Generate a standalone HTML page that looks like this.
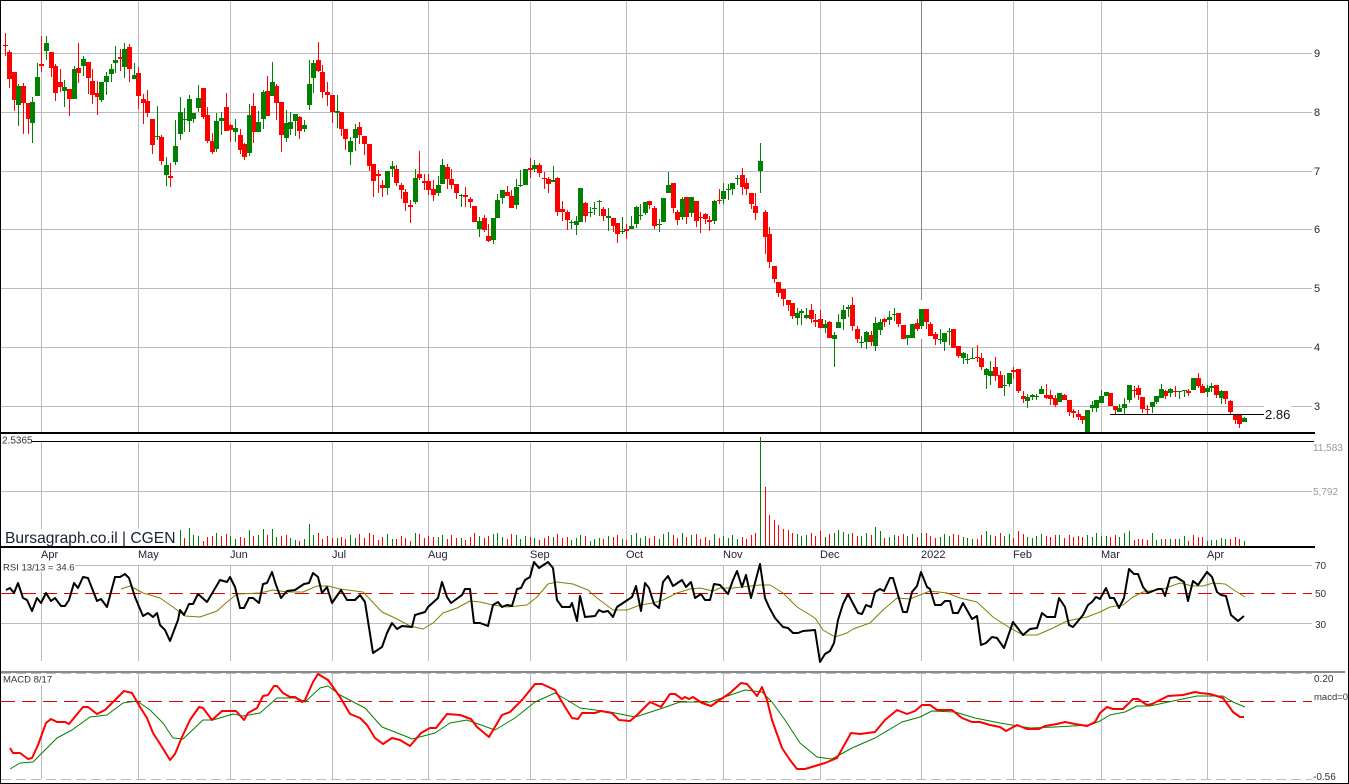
<!DOCTYPE html>
<html>
<head>
<meta charset="utf-8">
<title>Bursagraph.co.il | CGEN</title>
<style>
html,body{margin:0;padding:0;background:#fff;width:1349px;height:784px;overflow:hidden}
svg{display:block}
text{font-family:"Liberation Sans",Arial,sans-serif;fill:#333;font-size:10px}
.m{font-size:11px;fill:#223}
.g{fill:#999}
.line{fill:none;stroke-linejoin:round}
</style>
</head>
<body>
<svg width="1349" height="784" viewBox="0 0 1349 784" xmlns="http://www.w3.org/2000/svg">
<rect width="1349" height="784" fill="#fff"/>

<!-- grid -->
<g shape-rendering="crispEdges" fill="none">
<path stroke="#bbb" d="M1 53.5H1312M1 112.5H1312M1 171.5H1312M1 229.5H1312M1 288.5H1312M1 347.5H1312M1 406.5H1312M1 491.5H1312M1 565.5H1312M1 623.5H1312"/>
<path stroke="#bbb" d="M41.5 1V432M138.5 1V432M230.5 1V432M332.5 1V432M428.5 1V432M530.5 1V432M626.5 1V432M723.5 1V432M820.5 1V432M1013.5 1V432M1101.5 1V432M1207.5 1V432"/>
<path stroke="#888" d="M921.5 1V300M921.5 339V432"/>
<path stroke="#bbb" d="M41.5 442V529M138.5 442V529M230.5 442V546M332.5 442V546M428.5 442V546M530.5 442V546M626.5 442V546M723.5 442V546M820.5 442V546M921.5 442V546M1013.5 442V546M1101.5 442V546M1207.5 442V546"/>
<path stroke="#bbb" d="M41.5 572V661M138.5 565V661M230.5 565V661M332.5 565V661M428.5 565V661M530.5 565V661M626.5 565V661M723.5 565V661M820.5 565V661M921.5 565V661M1013.5 565V661M1101.5 565V661M1207.5 565V661"/>
<path stroke="#bbb" d="M41.5 685V779M138.5 673V779M230.5 673V779M332.5 673V779M428.5 673V779M530.5 673V779M626.5 673V779M723.5 673V779M820.5 673V779M921.5 673V779M1013.5 673V779M1101.5 673V779M1207.5 673V779"/>
<path stroke="#bbb" stroke-dasharray="10 5" d="M1 673.5H1312M1 779.5H1312"/>
<path stroke="#e00000" stroke-dasharray="14 7" d="M1 593.5H1312M1 701.5H1312"/>
</g>

<!-- red candles -->
<g fill="none" stroke="#f00" shape-rendering="crispEdges">
<path stroke-width="1" d="M5.5 33V56M9.5 50V88M14.5 72V111M23.5 83V134M28.5 103V134M41.5 36V72M51.5 52V77M55.5 64V101M60.5 69V92M69.5 89V116M78.5 43V83M88.5 62V94M92.5 69V104M97.5 81V115M120.5 49V71M129.5 44V82M138.5 67V109M143.5 94V124M147.5 90V117M152.5 119V154M161.5 135V165M170.5 163V187M203.5 88V119M207.5 107V143M212.5 133V154M226.5 93V131M230.5 124V142M240.5 129V154M244.5 143V160M253.5 93V143M267.5 76V116M276.5 84V120M281.5 102V152M299.5 116V139M318.5 42V72M322.5 65V98M327.5 82V106M332.5 95V123M341.5 112V136M345.5 129V150M359.5 122V144M364.5 136V155M369.5 144V171M373.5 164V197M378.5 170V193M382.5 180V197M396.5 165V186M401.5 183V199M405.5 189V211M410.5 200V223M419.5 151V180M424.5 174V190M428.5 174V195M433.5 180V201M447.5 164V189M451.5 169V189M456.5 184V199M465.5 187V207M470.5 197V208M474.5 206V222M484.5 215V232M488.5 224V242M507.5 186V196M511.5 190V208M530.5 158V178M539.5 163V177M544.5 172V189M548.5 177V193M557.5 177V216M562.5 201V221M567.5 210V230M585.5 202V222M603.5 207V221M613.5 218V232M617.5 223V243M626.5 224V239M649.5 201V209M654.5 206V229M673.5 183V213M677.5 210V225M686.5 197V224M696.5 201V227M700.5 212V233M705.5 213V224M709.5 216V231M719.5 189V204M742.5 168V195M746.5 178V195M751.5 193V209M755.5 193V220M765.5 210V254M769.5 227V268M774.5 266V283M778.5 282V297M783.5 289V306M788.5 300V311M792.5 303V319M811.5 304V323M815.5 314V327M820.5 310V328M829.5 321V338M852.5 297V331M857.5 326V343M871.5 331V346M884.5 318V327M898.5 313V327M903.5 325V339M917.5 319V331M926.5 309V329M930.5 322V336M935.5 332V345M953.5 329V348M958.5 346V358M977.5 345V362M981.5 353V370M995.5 357V381M1000.5 371V388M1013.5 367V379M1018.5 369V393M1023.5 391V403M1046.5 384V399M1050.5 390V405M1055.5 395V407M1064.5 394V400M1069.5 400V416M1073.5 409V418M1078.5 410V420M1082.5 416V424M1110.5 393V406M1115.5 406V415M1134.5 386V398M1138.5 385V400M1142.5 397V413M1147.5 405V415M1165.5 390V399M1175.5 386V397M1188.5 389V396M1198.5 373V388M1202.5 384V393M1216.5 385V398M1225.5 391V404M1230.5 400V414M1235.5 415V424M1239.5 415V428"/>
<path stroke-width="5" d="M5.5 45V46M9.5 52V79M14.5 72V100M23.5 86V103M28.5 103V119M41.5 64V66M51.5 52V68M55.5 66V93M60.5 82V87M69.5 89V99M78.5 68V73M88.5 62V78M92.5 81V95M97.5 93V97M120.5 57V59M129.5 47V69M138.5 73V96M143.5 99V103M147.5 101V113M152.5 119V145M161.5 137V161M170.5 176V178M203.5 88V117M207.5 115V141M212.5 141V152M226.5 107V131M230.5 125V130M240.5 135V150M244.5 144V157M253.5 106V132M267.5 91V116M276.5 86V103M281.5 102V135M299.5 117V131M318.5 60V71M322.5 72V92M327.5 92V95M332.5 95V112M341.5 112V129M345.5 129V139M359.5 127V135M364.5 136V144M369.5 144V166M373.5 164V181M378.5 174V176M382.5 185V188M396.5 169V183M401.5 185V190M405.5 192V203M410.5 205V207M419.5 174V178M424.5 181V183M428.5 181V190M433.5 189V195M447.5 167V179M451.5 179V185M456.5 184V193M465.5 195V197M470.5 199V202M474.5 206V222M484.5 218V230M488.5 236V241M507.5 192V196M511.5 196V208M530.5 168V170M539.5 165V173M544.5 178V179M548.5 179V184M557.5 178V212M562.5 209V212M567.5 212V220M585.5 203V216M603.5 209V216M613.5 218V226M617.5 223V234M626.5 229V231M649.5 201V205M654.5 208V226M673.5 183V208M677.5 212V220M686.5 197V217M696.5 201V221M700.5 217V218M705.5 214V219M709.5 220V222M719.5 200V201M742.5 175V187M746.5 183V189M751.5 193V204M755.5 206V213M765.5 212V237M769.5 234V262M774.5 266V279M778.5 282V293M783.5 289V299M788.5 300V305M792.5 303V316M811.5 310V319M815.5 320V322M820.5 319V328M829.5 322V338M852.5 305V326M857.5 329V339M871.5 335V342M884.5 319V322M898.5 313V324M903.5 325V339M917.5 323V329M926.5 309V322M930.5 324V336M935.5 334V339M953.5 329V348M958.5 346V356M977.5 357V358M981.5 358V367M995.5 367V376M1000.5 375V388M1013.5 370V372M1018.5 369V391M1023.5 396V399M1046.5 395V398M1050.5 395V399M1055.5 398V405M1064.5 395V400M1069.5 400V412M1073.5 411V413M1078.5 414V417M1082.5 416V420M1110.5 393V406M1115.5 406V410M1134.5 390V391M1138.5 388V395M1142.5 397V409M1147.5 409V410M1165.5 391V396M1175.5 391V392M1188.5 391V393M1198.5 378V386M1202.5 386V393M1216.5 385V395M1225.5 391V399M1230.5 401V412M1235.5 415V420M1239.5 415V424"/>
</g>

<!-- green candles -->
<g fill="none" stroke="#008000" shape-rendering="crispEdges">
<path stroke-width="1" d="M18.5 84V126M32.5 97V143M37.5 63V96M46.5 36V60M64.5 80V107M74.5 66V99M83.5 56V76M101.5 82V102M106.5 72V95M111.5 64V82M115.5 46V73M124.5 43V78M134.5 63V79M157.5 106V140M166.5 157V186M175.5 120V165M180.5 97V140M184.5 108V132M189.5 95V132M193.5 113V123M198.5 85V112M216.5 113V152M221.5 112V135M235.5 119V142M249.5 104V156M258.5 111V132M263.5 90V129M272.5 62V96M286.5 110V142M290.5 112V135M295.5 114V136M304.5 120V132M309.5 60V110M313.5 60V93M337.5 95V128M350.5 137V165M355.5 124V151M387.5 171V195M392.5 161V177M415.5 169V204M438.5 176V196M442.5 159V184M461.5 194V207M479.5 217V237M493.5 218V244M497.5 194V218M502.5 190V204M516.5 179V209M520.5 170V187M525.5 169V185M534.5 160V172M553.5 166V182M571.5 220V229M576.5 216V235M580.5 188V222M590.5 207V217M594.5 202V215M599.5 200V216M608.5 208V231M622.5 217V234M631.5 216V229M636.5 206V228M640.5 204V220M645.5 202V215M659.5 219V232M663.5 198V222M668.5 172V193M682.5 197V220M691.5 197V217M714.5 200V224M723.5 183V204M728.5 184V200M732.5 183V195M737.5 175V185M760.5 143V193M797.5 308V325M801.5 309V325M806.5 308V319M825.5 320V333M834.5 332V367M838.5 314V328M843.5 305V330M848.5 305V317M861.5 336V348M866.5 331V349M875.5 317V351M880.5 319V335M889.5 311V325M894.5 308V321M907.5 335V345M912.5 324V338M921.5 309V329M940.5 329V344M944.5 333V351M949.5 328V345M963.5 352V364M967.5 354V364M972.5 348V359M986.5 368V389M990.5 361V385M1004.5 375V396M1009.5 373V387M1027.5 394V408M1032.5 394V400M1036.5 394V400M1041.5 386V394M1059.5 393V402M1087.5 410V432M1092.5 401V412M1096.5 400V412M1101.5 390V403M1106.5 392V396M1119.5 404V412M1124.5 398V415M1129.5 385V403M1152.5 402V413M1156.5 396V404M1161.5 384V398M1170.5 388V397M1179.5 391V399M1184.5 390V397M1193.5 378V390M1207.5 385V397M1211.5 383V392M1221.5 390V404M1244.5 417V422"/>
<path stroke-width="5" d="M18.5 86V105M32.5 102V123M37.5 77V96M46.5 43V51M64.5 87V91M74.5 69V99M83.5 59V66M101.5 82V100M106.5 76V82M111.5 69V74M115.5 60V63M124.5 49V67M134.5 75V79M157.5 136V137M166.5 165V175M175.5 146V162M180.5 112V134M184.5 119V120M189.5 99V121M193.5 113V119M198.5 98V108M216.5 121V149M221.5 118V121M235.5 128V132M249.5 115V153M258.5 122V132M263.5 92V119M272.5 82V96M286.5 123V138M290.5 122V129M295.5 114V121M304.5 125V129M309.5 84V105M313.5 63V78M337.5 111V113M350.5 141V152M355.5 129V138M387.5 171V188M392.5 166V169M415.5 178V202M438.5 185V193M442.5 165V184M461.5 195V196M479.5 221V229M493.5 218V240M497.5 200V218M502.5 190V198M516.5 187V205M520.5 185V186M525.5 169V185M534.5 165V169M553.5 180V182M571.5 222V223M576.5 221V225M580.5 188V222M590.5 212V213M594.5 208V209M599.5 201V202M608.5 216V218M622.5 231V232M631.5 226V229M636.5 207V224M640.5 215V216M645.5 202V213M659.5 224V225M663.5 198V222M668.5 185V193M682.5 199V217M691.5 197V213M714.5 201V221M723.5 191V199M728.5 189V190M732.5 183V189M737.5 178V179M760.5 161V171M797.5 313V318M801.5 311V313M806.5 315V318M825.5 324V328M834.5 335V339M838.5 322V328M843.5 310V319M848.5 307V309M861.5 342V343M866.5 332V342M875.5 323V346M880.5 322V330M889.5 317V320M894.5 314V315M907.5 335V338M912.5 324V338M921.5 309V326M940.5 339V340M944.5 333V342M949.5 331V332M963.5 353V358M967.5 359V360M972.5 358V359M986.5 369V375M990.5 371V376M1004.5 385V386M1009.5 373V384M1027.5 397V401M1032.5 395V397M1036.5 396V397M1041.5 389V394M1059.5 393V402M1087.5 410V432M1092.5 405V408M1096.5 400V408M1101.5 396V403M1106.5 392V396M1119.5 408V412M1124.5 404V408M1129.5 385V400M1152.5 402V407M1156.5 396V402M1161.5 389V398M1170.5 389V393M1179.5 391V392M1184.5 390V391M1193.5 378V390M1207.5 388V392M1211.5 386V388M1221.5 391V398M1244.5 418V422"/>
</g>

<!-- panel lines -->
<g shape-rendering="crispEdges">
<rect x="0" y="432" width="1315" height="2" fill="#000"/>
<rect x="31" y="441" width="1283" height="1" fill="#000"/>
<rect x="1110" y="414" width="154" height="1" fill="#000"/>
<rect x="1264" y="404" width="27" height="20" fill="#fff"/>
</g>

<!-- volume -->
<g fill="none" shape-rendering="crispEdges" stroke-width="1">
<path stroke="#f00" d="M184.5 538V546M203.5 541V546M207.5 537V546M212.5 536V546M221.5 536V546M226.5 534V546M240.5 537V546M244.5 538V546M253.5 536V546M267.5 535V546M281.5 536V546M286.5 535V546M299.5 541V546M318.5 533V546M322.5 539V546M327.5 536V546M332.5 538V546M341.5 537V546M345.5 539V546M359.5 534V546M364.5 538V546M369.5 533V546M373.5 535V546M378.5 540V546M382.5 537V546M396.5 539V546M401.5 536V546M405.5 538V546M410.5 541V546M419.5 534V546M424.5 538V546M428.5 536V546M433.5 537V546M447.5 539V546M451.5 535V546M456.5 538V546M465.5 540V546M470.5 537V546M474.5 533V546M484.5 538V546M488.5 536V546M507.5 539V546M511.5 534V546M530.5 537V546M539.5 540V546M544.5 538V546M548.5 536V546M557.5 534V546M562.5 538V546M567.5 537V546M585.5 536V546M603.5 539V546M613.5 537V546M617.5 535V546M626.5 540V546M649.5 538V546M654.5 536V546M673.5 535V546M677.5 538V546M686.5 537V546M696.5 534V546M700.5 539V546M705.5 537V546M709.5 540V546M719.5 538V546M742.5 537V546M746.5 539V546M751.5 535V546M755.5 533V546M765.5 487V546M769.5 515V546M774.5 520V546M778.5 525V546M783.5 529V546M788.5 530V546M792.5 533V546M811.5 533V546M815.5 536V546M820.5 531V546M829.5 534V546M852.5 533V546M857.5 536V546M871.5 535V546M884.5 538V546M898.5 536V546M903.5 534V546M917.5 537V546M926.5 533V546M930.5 536V546M935.5 538V546M953.5 534V546M958.5 535V546M977.5 539V546M981.5 535V546M995.5 536V546M1000.5 533V546M1013.5 538V546M1018.5 531V546M1023.5 534V546M1046.5 536V546M1050.5 537V546M1055.5 535V546M1064.5 538V546M1069.5 535V546M1073.5 537V546M1078.5 536V546M1082.5 537V546M1110.5 537V546M1115.5 535V546M1134.5 540V546M1138.5 539V546M1142.5 539V546M1147.5 540V546M1165.5 539V546M1175.5 539V546M1188.5 541V546M1193.5 535V546M1198.5 537V546M1202.5 537V546M1230.5 539V546M1235.5 537V546M1239.5 539V546"/>
<path stroke="#008000" d="M180.5 530V546M189.5 528V546M193.5 535V546M198.5 536V546M216.5 533V546M230.5 536V546M235.5 539V546M249.5 530V546M258.5 535V546M263.5 529V546M272.5 529V546M276.5 537V546M290.5 538V546M295.5 540V546M304.5 539V546M309.5 524V546M313.5 535V546M337.5 538V546M350.5 535V546M355.5 538V546M387.5 534V546M392.5 539V546M415.5 533V546M438.5 537V546M442.5 535V546M461.5 538V546M479.5 536V546M493.5 534V546M497.5 533V546M502.5 537V546M516.5 535V546M520.5 539V546M525.5 536V546M534.5 538V546M553.5 537V546M571.5 540V546M576.5 538V546M580.5 535V546M590.5 541V546M594.5 539V546M599.5 538V546M608.5 536V546M622.5 539V546M631.5 535V546M636.5 533V546M640.5 538V546M645.5 536V546M659.5 539V546M663.5 534V546M668.5 532V546M682.5 533V546M691.5 535V546M714.5 534V546M723.5 536V546M728.5 538V546M732.5 535V546M737.5 539V546M760.5 437V546M797.5 534V546M801.5 536V546M806.5 535V546M825.5 537V546M834.5 533V546M838.5 530V546M843.5 532V546M848.5 534V546M861.5 536V546M866.5 533V546M875.5 527V546M880.5 531V546M889.5 537V546M894.5 535V546M907.5 536V546M912.5 534V546M921.5 533V546M940.5 537V546M944.5 534V546M949.5 536V546M963.5 537V546M967.5 538V546M972.5 539V546M986.5 531V546M990.5 535V546M1004.5 536V546M1009.5 534V546M1027.5 537V546M1032.5 538V546M1036.5 536V546M1041.5 534V546M1059.5 535V546M1087.5 535V546M1092.5 537V546M1096.5 533V546M1101.5 536V546M1106.5 536V546M1119.5 537V546M1124.5 533V546M1129.5 531V546M1152.5 533V546M1156.5 540V546M1161.5 539V546M1170.5 539V546M1179.5 539V546M1184.5 536V546M1207.5 541V546M1211.5 540V546M1216.5 540V546M1221.5 538V546M1225.5 539V546M1244.5 541V546"/>
</g>
<rect x="1" y="529" width="177" height="17" fill="#fff"/>
<rect x="0" y="546" width="1315" height="2" fill="#000"/>
<rect x="0" y="671" width="1345" height="2" fill="#8a8a8a"/>

<!-- RSI MA -->
<polyline class="line" stroke="#808000" stroke-width="1" points="121,589 130,586 143,593 160,598 173,607 185,616 200,617 217,611 227,602 237,594 260,593 273,590 287,592 303,592 317,586 328,586 340,589 363,592 382,612 395,618 410,626 423,629 433,623 443,613 457,608 470,601 480,602 493,605 507,607 527,605 537,597 548,584 557,582 573,584 588,590 597,598 613,610 627,610 640,605 653,603 663,600 677,593 690,589 700,588 713,591 720,588 733,588 760,585 770,585 783,593 797,607 815,618 823,630 835,637 847,633 853,629 870,623 883,610 897,598 910,599 930,591 947,593 960,598 977,602 993,617 1010,628 1023,635 1037,635 1053,628 1067,621 1087,617 1100,612 1110,607 1123,605 1133,597 1143,592 1163,589 1180,583 1193,586 1203,586 1213,583 1225,584 1237,592 1245,597"/>
<!-- RSI -->
<polyline class="line" stroke="#000" stroke-width="2" points="6,590 10,588 14,593 18,583 23,598 27,600 32,611 37,598 41,603 46,593 51,601 55,598 61,606 65,606 69,600 74,583 78,588 83,577 88,578 97,601 101,599 107,607 115,577 120,577 125,574 129,578 135,597 143,616 148,613 153,617 157,613 160,625 165,630 170,641 178,620 180,610 184,615 189,604 193,604 198,594 207,602 220,580 227,582 230,577 235,587 240,608 244,608 249,598 253,598 259,603 263,584 267,583 272,572 276,585 281,598 287,591 295,590 304,584 309,583 313,573 318,577 322,593 327,587 332,603 341,590 347,600 355,600 360,595 365,602 373,653 382,647 387,633 392,623 397,629 402,626 412,627 415,615 425,612 428,607 438,598 442,582 447,597 451,603 462,595 465,589 470,589 474,623 480,623 488,626 493,605 498,602 502,607 507,605 512,606 517,589 521,588 525,580 530,577 534,562 539,568 548,562 553,568 557,600 562,607 570,607 572,603 577,621 580,596 585,617 595,616 599,610 603,612 608,611 613,617 617,607 632,597 636,586 641,611 645,583 649,588 654,604 659,608 663,582 668,576 673,586 682,580 686,587 691,582 695,598 701,594 705,600 710,600 714,584 720,585 728,594 733,580 737,571 742,587 746,575 751,598 760,564 765,598 769,607 775,618 783,627 788,628 793,633 798,633 803,631 815,630 820,662 825,654 830,651 834,643 838,620 843,604 848,594 858,613 862,614 866,605 871,607 875,592 880,589 884,591 890,578 893,578 903,612 907,612 912,592 917,586 921,572 927,587 930,589 935,605 941,605 945,601 950,601 953,613 958,613 963,603 972,619 977,616 981,645 986,643 992,637 997,638 1004,648 1013,622 1023,635 1030,629 1037,628 1042,613 1047,617 1055,617 1059,598 1065,607 1069,625 1073,627 1083,615 1088,605 1092,602 1096,597 1100,599 1106,588 1110,598 1114,598 1119,608 1124,598 1129,569 1134,574 1138,574 1143,587 1148,593 1158,589 1162,589 1165,596 1170,578 1176,577 1184,582 1188,601 1193,581 1198,585 1207,572 1212,577 1217,592 1221,595 1226,596 1231,615 1238,621 1244,616"/>

<!-- MACD signal -->
<polyline class="line" stroke="#008000" stroke-width="1" points="10,769 20,763 33,762 42,753 57,738 72,730 90,717 107,715 123,703 137,701 150,710 163,723 173,738 183,739 203,720 213,720 233,714 243,716 260,713 277,698 297,698 305,702 320,688 328,686 340,695 365,708 382,727 405,736 412,739 435,733 450,723 467,720 495,730 515,718 535,702 555,693 567,700 580,708 610,712 635,717 660,709 680,702 710,702 745,690 762,692 772,702 785,720 800,743 817,757 832,759 852,748 875,738 902,722 920,717 932,711 955,712 975,718 1000,723 1030,728 1055,727 1090,725 1100,721 1110,715 1125,712 1137,706 1150,706 1173,701 1197,696 1223,696 1233,702 1245,707"/>
<!-- MACD -->
<polyline class="line" stroke="#f00" stroke-width="2" points="10,748 13,753 20,753 28,759 32,758 38,745 46,723 51,719 57,722 65,722 69,724 83,707 88,707 97,714 105,710 115,700 124,691 132,693 140,707 147,718 153,733 162,747 170,760 175,754 182,737 190,720 199,707 203,708 212,720 222,711 236,711 244,720 248,713 257,708 263,696 268,695 274,686 277,686 283,693 290,697 295,697 302,702 305,700 313,682 318,674 328,680 340,697 350,714 360,718 367,725 375,738 383,744 392,738 400,740 410,746 421,733 430,728 436,728 447,714 460,715 471,719 477,727 489,737 502,715 510,712 522,700 535,684 542,684 555,690 565,707 572,718 578,719 582,713 595,713 601,711 612,713 619,720 630,721 637,715 650,702 661,707 670,694 675,694 682,699 685,697 689,699 693,697 702,703 711,706 730,693 741,683 747,684 757,696 762,687 767,700 772,720 782,748 790,760 797,769 805,769 825,763 837,758 851,733 860,734 875,732 885,720 897,710 907,714 915,711 922,705 930,705 937,710 952,710 962,718 972,722 980,722 990,725 1000,727 1006,731 1017,725 1027,729 1039,729 1045,726 1057,724 1065,722 1075,724 1087,726 1095,722 1100,713 1107,707 1113,709 1123,709 1133,699 1138,699 1147,705 1152,704 1162,699 1168,696 1183,695 1195,692 1200,693 1210,694 1223,698 1233,712 1240,717 1244,717"/>

<!-- labels with white background -->
<rect x="1" y="565" width="74" height="7" fill="#fff"/>
<rect x="1" y="674" width="52" height="11" fill="#fff"/>
<rect x="1" y="436" width="30" height="9" fill="#fff"/>
<text x="2" y="443.5">2.5365</text>
<text x="3" y="570.5" style="font-size:9.5px">RSI 13/13 = 34.6</text>
<text x="3" y="682.5" style="font-size:9.5px">MACD 8/17</text>
<text x="5" y="543" style="font-size:15.6px;fill:#1a2230">Bursagraph.co.il | CGEN</text>

<text class="m" x="41" y="558">Apr</text>
<text class="m" x="138" y="558">May</text>
<text class="m" x="230" y="558">Jun</text>
<text class="m" x="332" y="558">Jul</text>
<text class="m" x="428" y="558">Aug</text>
<text class="m" x="530" y="558">Sep</text>
<text class="m" x="626" y="558">Oct</text>
<text class="m" x="723" y="558">Nov</text>
<text class="m" x="820" y="558">Dec</text>
<text class="m" x="921" y="558">2022</text>
<text class="m" x="1013" y="558">Feb</text>
<text class="m" x="1101" y="558">Mar</text>
<text class="m" x="1207" y="558">Apr</text>

<text class="m" x="1314" y="57">9</text>
<text class="m" x="1314" y="116">8</text>
<text class="m" x="1314" y="175">7</text>
<text class="m" x="1314" y="233">6</text>
<text class="m" x="1314" y="292">5</text>
<text class="m" x="1314" y="351">4</text>
<text class="m" x="1314" y="410">3</text>
<text x="1265" y="419" style="font-size:13px;fill:#111">2.86</text>

<text class="g" x="1313" y="451">11,583</text>
<text class="g" x="1313" y="495">5,792</text>
<text x="1315" y="569">70</text>
<text x="1315" y="597">50</text>
<text x="1315" y="628">30</text>
<text x="1314" y="682">0.20</text>
<text x="1314" y="700" style="font-size:9.5px">macd=0</text>
<text x="1313" y="780">-0.56</text>

<!-- frame -->
<g shape-rendering="crispEdges">
<rect x="0" y="0" width="1349" height="1" fill="#000"/>
<rect x="0" y="0" width="1" height="784" fill="#000"/>
<rect x="1348" y="0" width="1" height="784" fill="#000"/>
<rect x="0" y="783" width="1349" height="1" fill="#000"/>
</g>
</svg>
</body>
</html>
